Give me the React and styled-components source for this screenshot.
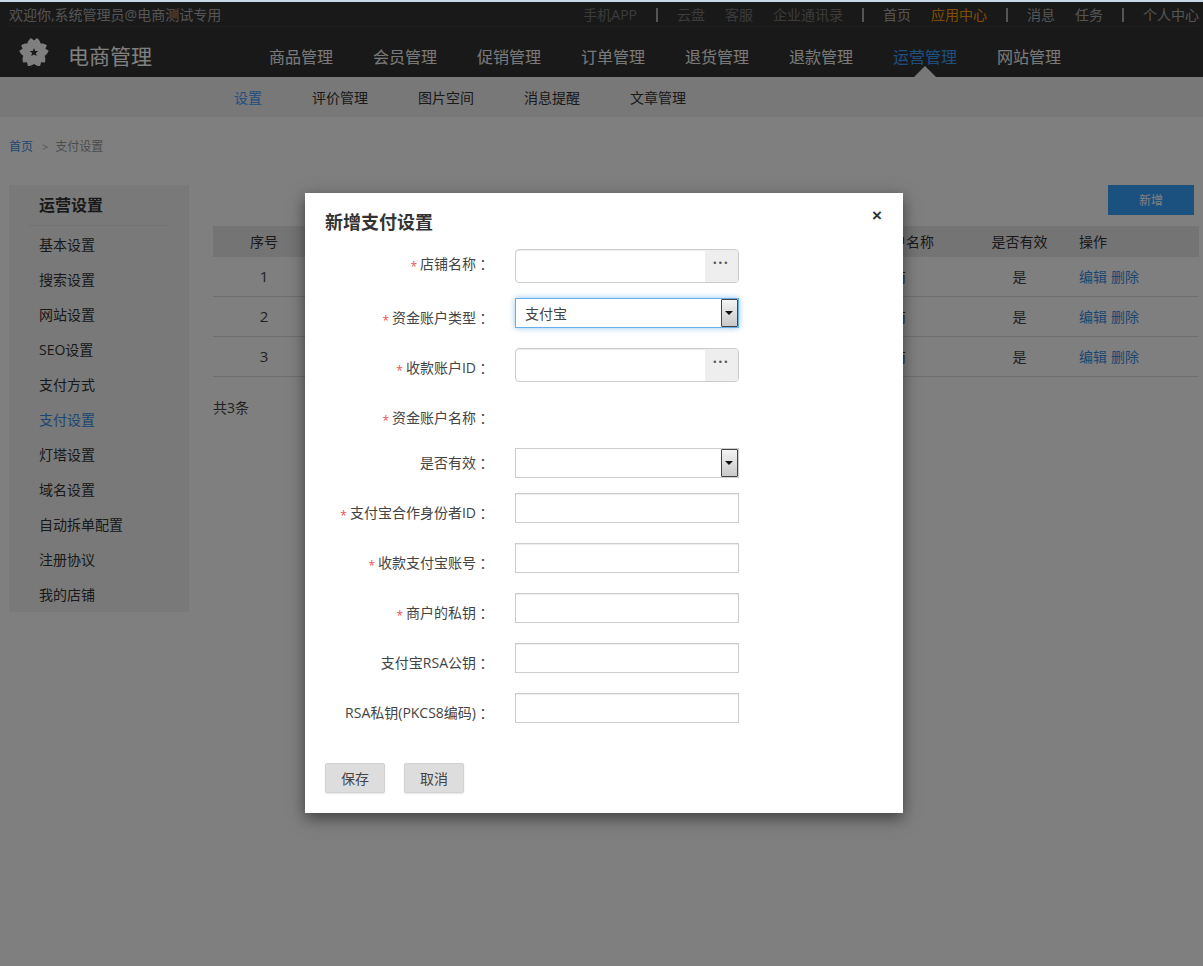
import React from 'react';
import styled, { createGlobalStyle } from 'styled-components';

const GlobalStyle = createGlobalStyle`
  html, body { margin: 0; padding: 0; background: #fff; }
  body {
    font-family: "Open Sans", "Noto Sans CJK SC", sans-serif;
    font-size: 14px;
    color: #333;
  }
  * { box-sizing: border-box; }
`;

const TopStrip = styled.div`
  height: 2px;
  background: #c9d9ea;
`;

const Stage = styled.div`
  position: relative;
  height: 964px;
  overflow: hidden;
`;

const Header = styled.header`
  background: #333;
`;

const TopBar = styled.div`
  height: 25px;
  margin: 0 4px 0 9px;
  padding-top: 2px;
  display: flex;
  align-items: center;
  justify-content: space-between;
  border-bottom: 1px solid #3e3e3e;
  line-height: 22px;
  color: #aaa;
`;

const TopLinks = styled.div`
  display: flex;
  align-items: center;
  gap: 20px;
`;

const TopLink = styled.a`
  color: ${p => p.$color || '#aaa'};
`;

const TopSep = styled.i`
  width: 2px;
  height: 14px;
  margin: 0 -1px;
  background: #aaa;
`;

const MainBar = styled.div`
  height: 50px;
  display: flex;
  align-items: center;
`;

const Brand = styled.div`
  width: 269px;
  padding-left: 19px;
  display: flex;
  align-items: center;
  gap: 19px;
  font-size: 21px;
  color: #fff;
  svg { display: block; margin-bottom: 2px; }
`;

const BrandName = styled.span`
  margin-top: 6px;
`;

const MainNav = styled.nav`
  display: flex;
  gap: 40px;
  padding-top: 10px;
`;

const MainLink = styled.a`
  position: relative;
  font-size: 16px;
  line-height: 20px;
  color: ${p => (p.$active ? '#3a9fff' : '#f2f2f2')};
  ${p => p.$active && `
    &::after {
      content: '';
      position: absolute;
      left: 21px;
      bottom: -10px;
      border: 11px solid transparent;
      border-top: 0;
      border-bottom-color: #f0f0f2;
    }
  `}
`;

const SubNav = styled.nav`
  height: 40px;
  padding-left: 234px;
  display: flex;
  align-items: center;
  gap: 50px;
  background: #f0f0f2;
`;

const SubLink = styled.a`
  color: ${p => (p.$active ? '#3a9fff' : '#333')};
`;

const Crumbs = styled.div`
  height: 68px;
  padding: 21px 0 0 9px;
  font-size: 12px;
  line-height: 18px;
  color: #999;
`;

const CrumbHome = styled.a`
  color: #3a8ee6;
`;

const CrumbGt = styled.span`
  margin: 0 7px 0 9px;
  color: #aaa;
  font-size: 11px;
`;

const Content = styled.div`
  display: flex;
  align-items: flex-start;
  padding-left: 9px;
  gap: 24px;
`;

const Sidebar = styled.aside`
  width: 180px;
  height: 427px;
  background: #f2f2f2;
  padding: 0 20px;
`;

const SideTitle = styled.h3`
  margin: 0 0 1px;
  height: 41px;
  padding: 8px 0 0 10px;
  border-bottom: 1px solid #e6e6e6;
  font-size: 16px;
  line-height: 24px;
  font-weight: 700;
  color: #333;
`;

const SideLink = styled.a`
  display: block;
  height: 35px;
  padding-left: 10px;
  line-height: 35px;
  color: ${p => (p.$active ? '#3a8ee6' : '#333')};
`;

const Main = styled.main`
  width: 986px;
`;

const Actions = styled.div`
  height: 41px;
  display: flex;
  justify-content: flex-end;
  padding-right: 5px;
  align-items: flex-start;
`;

const AddButton = styled.button`
  width: 86px;
  height: 30px;
  border: 0;
  background: #36a2ff;
  color: #fff;
  font: inherit;
  font-size: 12px;
`;

const Table = styled.table`
  width: 986px;
  table-layout: fixed;
  border-collapse: separate;
  border-spacing: 0;
`;

const Th = styled.th`
  height: 31px;
  padding: 0 0 2px;
  background: #e8e8ea;
  font-weight: 400;
  color: #333;
  text-align: ${p => p.$align || 'center'};
`;

const Td = styled.td`
  height: 40px;
  padding: 0 0 2px;
  border-bottom: 1px solid #ddd;
  color: #444;
  font-size: ${p => (p.$number ? 15 : 14)}px;
  text-align: ${p => p.$align || 'center'};
`;

const RowLink = styled.a`
  color: #3a8ee6;
  margin-right: 4px;
`;

const Total = styled.div`
  margin-top: 21px;
  line-height: 20px;
  color: #444;
`;

const Overlay = styled.div`
  position: absolute;
  inset: 0;
  padding: 191px 0 0 305px;
  background: rgba(0, 0, 0, 0.5);
`;

const Modal = styled.div`
  position: relative;
  width: 598px;
  height: 620px;
  padding: 17px 20px 0;
  background: #fff;
  box-shadow: 0 5px 15px rgba(0, 0, 0, 0.5);
`;

const Close = styled.span`
  position: absolute;
  top: 13px;
  right: 21px;
  font-family: "Liberation Sans", sans-serif;
  font-size: 17px;
  line-height: 20px;
  font-weight: 700;
  color: #333;
`;

const ModalTitle = styled.h2`
  margin: 0 0 14px;
  height: 25px;
  font-size: 18px;
  line-height: 25px;
  font-weight: 700;
  color: #333;
`;

const FormRow = styled.div`
  display: flex;
  align-items: flex-start;
  height: ${p => p.$height || 50}px;
`;

const Label = styled.label`
  display: flex;
  justify-content: flex-end;
  width: 165px;
  margin-right: 25px;
  padding-top: ${p => p.$top ?? 10}px;
  line-height: 20px;
  color: #444;
  white-space: nowrap;
`;

const Star = styled.em`
  margin-right: 3px;
  padding-top: 3px;
  font-style: normal;
  font-size: 12px;
  color: #f05050;
`;

const Colon = styled.span`
  font-family: "Noto Sans CJK TC", sans-serif;
`;

const PickerBox = styled.div`
  width: 224px;
  height: 34px;
  display: flex;
  border: 1px solid #ccc;
  border-radius: 4px;
  overflow: hidden;
  box-shadow: inset 0 1px 1px rgba(0, 0, 0, 0.075);
`;

const PickerInput = styled.input`
  flex: 1;
  min-width: 0;
  border: 0;
  outline: 0;
  background: transparent;
`;

const PickerAddon = styled.span`
  width: 33px;
  background: #eee;
  color: #555;
  font-family: "Liberation Sans", sans-serif;
  font-size: 9px;
  line-height: 26px;
  letter-spacing: 2.4px;
  text-align: center;
`;

const SelectWrap = styled.div`
  position: relative;
  width: 224px;
  height: 30px;
  ${p => p.$focused && 'box-shadow: 0 0 6px rgba(102, 175, 233, 0.7);'}
`;

const NativeSelect = styled.select`
  display: block;
  width: 100%;
  height: 100%;
  padding: 0 20px 0 9px;
  appearance: none;
  border: 1px solid ${p => (p.$focused ? '#66afe9' : '#ccc')};
  border-radius: 0;
  outline: 0;
  background: #fff;
  font: inherit;
  color: #444;
`;

const SelectArrow = styled.span`
  position: absolute;
  top: 1px;
  right: 1px;
  bottom: 1px;
  width: 17px;
  border: 1px solid #444;
  border-radius: 1px;
  background: linear-gradient(#f4f4f4, #c8c8c8);
  &::after {
    content: '';
    position: absolute;
    left: 3px;
    top: 11px;
    border: 4px solid transparent;
    border-bottom: 0;
    border-top-color: #111;
  }
`;

const TextInput = styled.input`
  display: block;
  width: 224px;
  height: 30px;
  border: 1px solid #ccc;
  outline: 0;
  box-shadow: inset 0 1px 1px rgba(0, 0, 0, 0.075);
`;

const Footer = styled.div`
  display: flex;
  gap: 19px;
  margin-top: 20px;
`;

const FooterButton = styled.button`
  width: 60px;
  height: 30px;
  border: 1px solid #d2d2d2;
  border-radius: 2px;
  background: #ddd;
  box-shadow: 0 1px 2px rgba(0, 0, 0, 0.1);
  font: inherit;
  color: #444;
`;

const Flower = () => (
  <svg width="30" height="29" viewBox="-15 -15.5 30 29" aria-hidden="true">
    {[0, 72, 144, 216, 288].map(a => (
      <path
        key={a}
        transform={`rotate(${a})`}
        d="M0 0 L-6 -6 C-7.5 -9 -6 -12 -3 -14.5 L0 -12 L3 -14.5 C6 -12 7.5 -9 6 -6 Z"
        fill="#fff"
      />
    ))}
    <path d="M0 -4.5 L1.2 -1.5 L4.3 -1.4 L1.9 .6 L2.7 3.6 L0 1.9 L-2.7 3.6 L-1.9 .6 L-4.3 -1.4 L-1.2 -1.5Z" fill="#333" />
  </svg>
);

const mainLinks = ['商品管理', '会员管理', '促销管理', '订单管理', '退货管理', '退款管理', '运营管理', '网站管理'];
const subLinks = ['设置', '评价管理', '图片空间', '消息提醒', '文章管理'];
const sideLinks = ['基本设置', '搜索设置', '网站设置', 'SEO设置', '支付方式', '支付设置', '灯塔设置', '域名设置', '自动拆单配置', '注册协议', '我的店铺'];
const textRows = [
  { label: '支付宝合作身份者ID', required: true },
  { label: '收款支付宝账号', required: true },
  { label: '商户的私钥', required: true },
  { label: '支付宝RSA公钥' },
  { label: 'RSA私钥(PKCS8编码)' },
];

const Picker = () => (
  <PickerBox>
    <PickerInput />
    <PickerAddon>•••</PickerAddon>
  </PickerBox>
);

const FieldLabel = ({ text, required, top }) => (
  <Label $top={top}>
    {required && <Star>*</Star>}
    <span>{text}</span>
    <Colon>：</Colon>
  </Label>
);

export default function App() {
  return (
    <>
      <GlobalStyle />
      <TopStrip />
      <Stage>
        <Header>
          <TopBar>
            <span>欢迎你,系统管理员@电商测试专用</span>
            <TopLinks>
              <TopLink $color="#777">手机APP</TopLink>
              <TopSep />
              <TopLink $color="#777">云盘</TopLink>
              <TopLink $color="#777">客服</TopLink>
              <TopLink $color="#777">企业通讯录</TopLink>
              <TopSep />
              <TopLink>首页</TopLink>
              <TopLink $color="#ff9900">应用中心</TopLink>
              <TopSep />
              <TopLink>消息</TopLink>
              <TopLink>任务</TopLink>
              <TopSep />
              <TopLink>个人中心</TopLink>
            </TopLinks>
          </TopBar>
          <MainBar>
            <Brand>
              <Flower />
              <BrandName>电商管理</BrandName>
            </Brand>
            <MainNav>
              {mainLinks.map(name => (
                <MainLink key={name} $active={name === '运营管理'}>{name}</MainLink>
              ))}
            </MainNav>
          </MainBar>
        </Header>
        <SubNav>
          {subLinks.map((name, i) => (
            <SubLink key={name} $active={i === 0}>{name}</SubLink>
          ))}
        </SubNav>
        <Crumbs>
          <CrumbHome>首页</CrumbHome>
          <CrumbGt>&gt;</CrumbGt>
          <span>支付设置</span>
        </Crumbs>
        <Content>
          <Sidebar>
            <SideTitle>运营设置</SideTitle>
            {sideLinks.map(name => (
              <SideLink key={name} $active={name === '支付设置'}>{name}</SideLink>
            ))}
          </Sidebar>
          <Main>
            <Actions>
              <AddButton>新增</AddButton>
            </Actions>
            <Table>
              <colgroup>
                <col width="102" />
                <col width="170" />
                <col width="170" />
                <col width="169" />
                <col width="136" />
                <col width="119" />
                <col width="120" />
              </colgroup>
              <thead>
                <tr>
                  <Th>序号</Th>
                  <Th>店铺名称</Th>
                  <Th>资金账户类型</Th>
                  <Th>收款账户ID</Th>
                  <Th>资金账户名称</Th>
                  <Th>是否有效</Th>
                  <Th $align="left">操作</Th>
                </tr>
              </thead>
              <tbody>
                {[1, 2, 3].map(n => (
                  <tr key={n}>
                    <Td $number>{n}</Td>
                    <Td>电商测试专用</Td>
                    <Td>支付宝</Td>
                    <Td>100{n}</Td>
                    <Td>电商</Td>
                    <Td>是</Td>
                    <Td $align="left">
                      <RowLink>编辑</RowLink>
                      <RowLink>删除</RowLink>
                    </Td>
                  </tr>
                ))}
              </tbody>
            </Table>
            <Total>共3条</Total>
          </Main>
        </Content>
        <Overlay>
          <Modal>
            <Close>×</Close>
            <ModalTitle>新增支付设置</ModalTitle>
            <FormRow $height={49}>
              <FieldLabel text="店铺名称" required top={5} />
              <Picker />
            </FormRow>
            <FormRow>
              <FieldLabel text="资金账户类型" required />
              <SelectWrap $focused>
                <NativeSelect $focused defaultValue="alipay">
                  <option value="alipay">支付宝</option>
                </NativeSelect>
                <SelectArrow />
              </SelectWrap>
            </FormRow>
            <FormRow>
              <FieldLabel text="收款账户ID" required />
              <Picker />
            </FormRow>
            <FormRow>
              <FieldLabel text="资金账户名称" required />
            </FormRow>
            <FormRow $height={45}>
              <FieldLabel text="是否有效" top={5} />
              <SelectWrap>
                <NativeSelect defaultValue="">
                  <option value="" />
                </NativeSelect>
                <SelectArrow />
              </SelectWrap>
            </FormRow>
            {textRows.map(row => (
              <FormRow key={row.label}>
                <FieldLabel text={row.label} required={row.required} />
                <TextInput />
              </FormRow>
            ))}
            <Footer>
              <FooterButton>保存</FooterButton>
              <FooterButton>取消</FooterButton>
            </Footer>
          </Modal>
        </Overlay>
      </Stage>
    </>
  );
}
